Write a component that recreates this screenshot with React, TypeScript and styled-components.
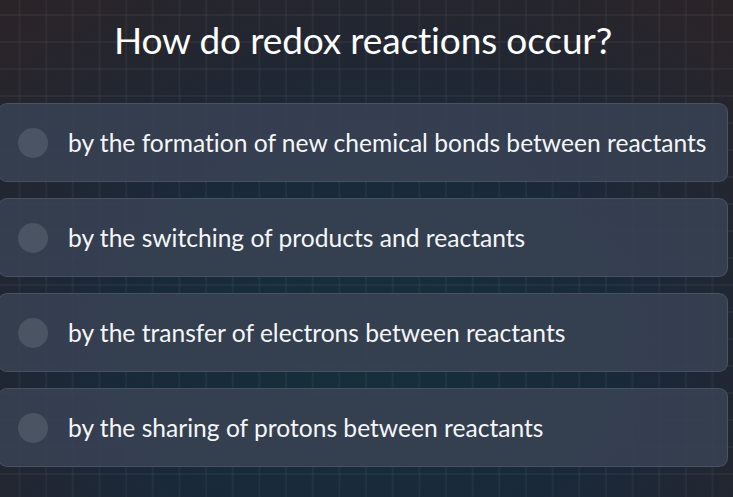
import React from "react";
import styled, { createGlobalStyle } from "styled-components";

const GlobalStyle = createGlobalStyle`
  html, body {
    margin: 0;
    padding: 0;
    height: 100%;
  }
  body {
    font-family: Lato, "Open Sans", sans-serif;
    font-variant-ligatures: none;
    overflow: hidden;
  }
`;

const Page = styled.div`
  width: 733px;
  height: 497px;
  overflow: hidden;
  background-color: #1b2a33;
  background-image:
    linear-gradient(rgba(255, 255, 255, 0.04) 2px, transparent 2px),
    linear-gradient(90deg, rgba(255, 255, 255, 0.04) 2px, transparent 2px),
    radial-gradient(ellipse 75% 85% at 50% 70%, #15303a 0%, #19293a 45%, #2a2429 100%);
  background-size: 26.67px 27px, 26.67px 27px, 100% 100%;
  background-position: 18.5px 14px, 18.5px 14px, 0 0;
`;

const Column = styled.div`
  width: 730px;
  margin-left: -2px;
  display: flex;
  flex-direction: column;
`;

const Question = styled.h1`
  margin: 0;
  padding: 17px 0 0;
  height: 103px;
  box-sizing: border-box;
  text-align: center;
  color: #ffffff;
  font-size: 37px;
  font-weight: 400;
  letter-spacing: -0.15px;
`;

const Options = styled.div`
  display: flex;
  flex-direction: column;
  gap: 16px;
`;

const Option = styled.div`
  height: 79px;
  box-sizing: border-box;
  display: flex;
  align-items: center;
  gap: 20px;
  padding: 0 19px;
  background: rgba(55, 65, 82, 0.93);
  border: 1px solid rgba(86, 98, 116, 0.55);
  border-radius: 9px;
  cursor: pointer;
`;

const Radio = styled.span`
  flex: none;
  width: 30px;
  height: 30px;
  border-radius: 50%;
  background: #4a5463;
`;

const Label = styled.span`
  color: #f5f6f8;
  font-size: 24.6px;
  white-space: nowrap;
`;

const answers = [
  "by the formation of new chemical bonds between reactants",
  "by the switching of products and reactants",
  "by the transfer of electrons between reactants",
  "by the sharing of protons between reactants",
];

const App: React.FC = () => {
  return (
    <>
      <GlobalStyle />
      <Page>
        <Column>
          <Question>How do redox reactions occur?</Question>
          <Options>
            {answers.map((text) => (
              <Option key={text}>
                <Radio />
                <Label>{text}</Label>
              </Option>
            ))}
          </Options>
        </Column>
      </Page>
    </>
  );
};

export default App;
